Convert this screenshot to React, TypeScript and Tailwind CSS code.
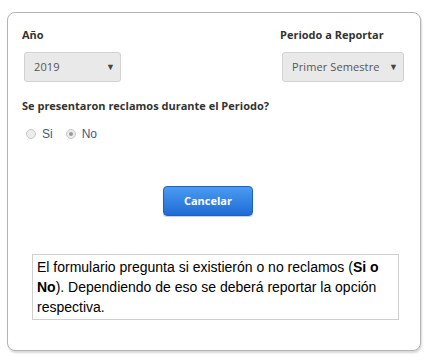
const SANS = "font-['Open_Sans',sans-serif]";

function FakeSelect({ value, width }: { value: string; width: string }) {
  return (
    <div
      className={`${width} h-[30px] flex items-center justify-between pl-[9px] pr-[5px] bg-[#e9e9e9] border border-[#d2d2d2] rounded-[3px] text-[11px] tracking-[0.1px] text-[#555] ${SANS}`}
    >
      <span>{value}</span>
      <span className="text-[9px] text-[#444]">▼</span>
    </div>
  );
}

function Radio({ checked, label }: { checked?: boolean; label: string }) {
  return (
    <label className="flex items-center gap-[6px]">
      <span className="w-[10px] h-[10px] rounded-full border border-[#c8c8c8] bg-[#ececec] flex items-center justify-center">
        {checked && <span className="w-[4px] h-[4px] rounded-full bg-[#9a9a9a]" />}
      </span>
      <span className="text-[12px] text-[#3d5a82] font-['Liberation_Sans',Arial,sans-serif]">
        {label}
      </span>
    </label>
  );
}

export default function App() {
  return (
    <div className="bg-white w-[430px] h-[364px] pt-[12px] pl-[7px]">
      <div className="w-[414px] h-[339px] bg-white border border-[#b4b4b4] rounded-[8px] shadow-[1px_2px_2px_rgba(0,0,0,0.15)] pt-[14px]">
        {/* Top row */}
        <div className="flex justify-between pl-[14px] pr-[16px]">
          <div className="flex flex-col">
            <span className={`text-[11px] leading-[16px] font-bold text-[#333] ${SANS}`}>Año</span>
            <div className="mt-[9px] ml-[2px]">
              <FakeSelect value="2019" width="w-[97px]" />
            </div>
          </div>
          <div className="flex flex-col">
            <span className={`text-[11px] leading-[16px] font-bold text-[#333] ${SANS}`}>
              Periodo a Reportar
            </span>
            <div className="mt-[9px] ml-[2px]">
              <FakeSelect value="Primer Semestre" width="w-[122px]" />
            </div>
          </div>
        </div>

        {/* Question */}
        <p className={`mt-[16px] pl-[14px] text-[11px] leading-[16px] font-bold text-[#333] ${SANS}`}>
          Se presentaron reclamos durante el Periodo?
        </p>

        <div className="mt-[12px] pl-[18px] h-[16px] flex items-center gap-[13px]">
          <Radio label="Si" />
          <Radio label="No" checked />
        </div>

        {/* Button */}
        <div className="mt-[44px] pl-[155px]">
          <button
            className={`w-[90px] h-[30px] rounded-[4px] border border-[#1c62c4] bg-gradient-to-b from-[#4a9bf0] to-[#1f6cd5] text-white text-[11px] font-bold shadow-[0_1px_1px_rgba(0,0,0,0.2)] ${SANS}`}
          >
            Cancelar
          </button>
        </div>

        {/* Info box */}
        <div className="mt-[38px] ml-[24px] w-[367px] border border-[#cfcfcf] px-[4px] py-[2px] text-[14px] leading-[20px] text-black font-['Liberation_Sans',Arial,sans-serif]">
          El formulario pregunta si existierón o no reclamos (<b>Si o</b>
          <br />
          <b>No</b>). Dependiendo de eso se deberá reportar la opción respectiva.
        </div>
      </div>
    </div>
  );
}
